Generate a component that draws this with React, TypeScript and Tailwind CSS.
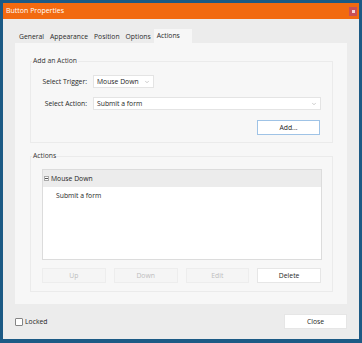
import { ChevronDown } from "lucide-react";

const tabs = ["General", "Appearance", "Position", "Options", "Actions"];

function Dropdown({ value, className }: { value: string; className: string }) {
  return (
    <div
      className={`flex h-[13px] items-center justify-between border border-[#e4e4e4] bg-white pl-[3px] pr-[3px] text-[#262626] ${className}`}
    >
      <span>{value}</span>
      <ChevronDown className="h-[6px] w-[6px] text-[#9a9a9a]" strokeWidth={2} />
    </div>
  );
}

function ActionButton({ label, disabled }: { label: string; disabled?: boolean }) {
  return (
    <button
      className={
        disabled
          ? "flex h-[15px] items-center justify-center border border-[#ededed] bg-[#f5f5f5] text-[#bdbdbd]"
          : "flex h-[15px] items-center justify-center border border-[#e6e6e6] bg-white text-[#262626]"
      }
    >
      {label}
    </button>
  );
}

export default function App() {
  return (
    <div
      className="flex h-[343px] w-[362px] flex-col bg-[#1c5a85] px-[3px] pb-[4px] pt-[3px] text-[6.8px] leading-[10px]"
      style={{ fontFamily: '"Open Sans", "Noto Sans", sans-serif' }}
    >
      {/* title bar */}
      <div className="flex h-[16px] shrink-0 items-center justify-between bg-[#f26a10] pl-[3px] pr-[2px]">
        <span className="text-[7px] text-white">Button Properties</span>
        <div className="flex h-[9px] w-[8px] items-center justify-center bg-[#c94f56]">
          <div className="h-[3px] w-[3px] bg-[#f3d6d8]" />
        </div>
      </div>

      <div className="flex flex-1 flex-col bg-[#ececec] pl-[12px] pr-[12px]">
        {/* tabs */}
        <div className="mt-[10px] flex h-[14px] items-end pl-[1px] text-[#2a2a2a]">
          {tabs.map((t) => (
            <div
              key={t}
              className={
                t === "Actions"
                  ? "flex h-[14px] items-center bg-[#f7f7f7] px-[3px] pr-[12px]"
                  : "flex h-[12px] items-center px-[3px]"
              }
            >
              {t}
            </div>
          ))}
        </div>

        {/* tab panel */}
        <div className="flex h-[261px] flex-col bg-[#f7f7f7] pl-[15px] pr-[14px] pt-[13px] text-[#262626]">
          <fieldset className="flex h-[87px] flex-col border border-[#ebebeb] px-[0px]">
            <legend className="ml-[1px] px-[1px] text-[#333333]">Add an Action</legend>
            <div className="mt-[9px] grid grid-cols-[56px_1fr] items-center gap-x-[6px] gap-y-[9px] pr-[11px]">
              <span className="text-right">Select Trigger:</span>
              <Dropdown value="Mouse Down" className="w-[61px]" />
              <span className="text-right">Select Action:</span>
              <Dropdown value="Submit a form" className="w-full" />
            </div>
            <div className="mt-[10px] flex justify-end pr-[12px]">
              <button className="flex h-[15px] w-[63px] items-center justify-center border border-[#9fc3e6] bg-white text-[#262626]">
                Add...
              </button>
            </div>
          </fieldset>

          <fieldset className="mt-[8px] flex h-[141px] flex-col border border-[#ebebeb]">
            <legend className="ml-[1px] px-[1px] text-[#333333]">Actions</legend>
            <div className="ml-[11px] mr-[10px] mt-[8px] flex h-[91px] flex-col border border-[#dcdcdc] bg-white">
              <div className="flex h-[17px] items-center bg-[#ececec] pl-[1px]">
                <span className="mr-[2px] flex h-[5px] w-[5px] items-center justify-center border border-[#a9a9a9] bg-white">
                  <span className="h-[1px] w-[3px] bg-[#555555]" />
                </span>
                <span>Mouse Down</span>
              </div>
              <div className="pl-[13px] pt-[4px]">Submit a form</div>
            </div>
            <div className="ml-[11px] mr-[11px] mt-[8px] grid grid-cols-4 gap-x-[8px]">
              <ActionButton label="Up" disabled />
              <ActionButton label="Down" disabled />
              <ActionButton label="Edit" disabled />
              <ActionButton label="Delete" />
            </div>
          </fieldset>
        </div>

        {/* bottom row */}
        <div className="flex flex-1 items-center justify-between">
          <label className="flex items-center gap-[2px] text-[#262626]">
            <span className="h-[8px] w-[8px] rounded-[1px] border border-[#858585] bg-white" />
            Locked
          </label>
          <button className="flex h-[15px] w-[63px] items-center justify-center border border-[#e6e6e6] bg-white text-[#262626]">
            Close
          </button>
        </div>
      </div>
    </div>
  );
}
